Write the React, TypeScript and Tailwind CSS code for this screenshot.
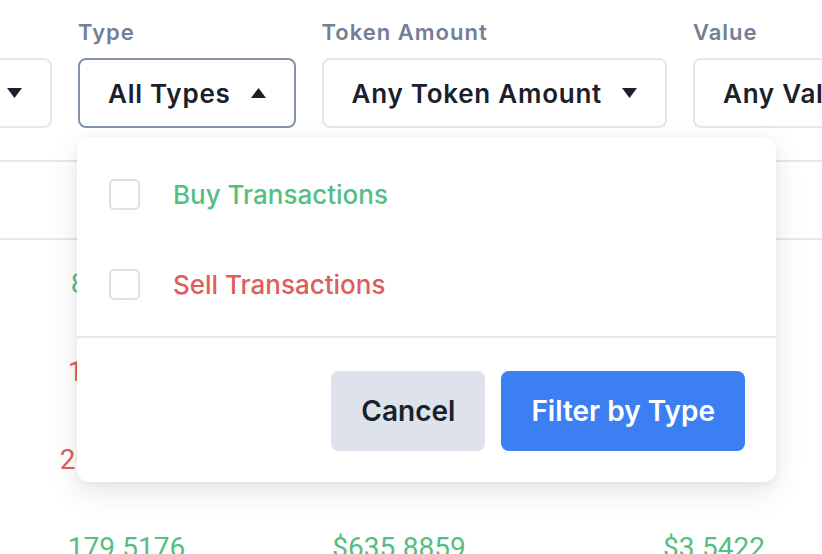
import React from "react";

function Caret({ up }: { up?: boolean }) {
  return (
    <svg width="15" height="10" viewBox="0 0 15 10" className="shrink-0">
      {up ? <path d="M7.5 0 L15 10 L0 10 Z" fill="#1a202c" /> : <path d="M0 0 L15 0 L7.5 10 Z" fill="#1a202c" />}
    </svg>
  );
}

function Filter({ label, value, active, extra }: { label: string; value: string; active?: boolean; extra?: string }) {
  return (
    <div className={"flex flex-col shrink-0 " + (extra ?? "")}>
      <div className="text-[22px] leading-[28px] font-semibold tracking-[1px] text-[#718096] mb-[12px] whitespace-nowrap">{label}</div>
      <div
        className={
          "h-[70px] flex items-center justify-end gap-[20px] px-[28px] rounded-[8px] border-2 bg-white whitespace-nowrap " +
          (active ? "border-[#8593a8]" : "border-[#e2e8f0]")
        }
      >
        <span className="text-[26px] font-semibold tracking-[0.75px] text-[#1a202c]">{value}</span>
        <Caret up={active} />
      </div>
    </div>
  );
}

const GREEN = "text-[#55be81]";
const RED = "text-[#e05d5a]";

const rows: { c: string; v: string[] }[] = [
  { c: GREEN, v: ["84.29317", "$298.4410", "$3.5404"] },
  { c: RED, v: ["152.0378", "$538.7719", "$3.5437"] },
  { c: RED, v: ["2046.1183", "$7251.0962", "$3.5439"] },
  { c: GREEN, v: ["179.5176", "$635.8859", "$3.5422"] },
];

export default function App() {
  return (
    <div className="relative w-[822px] h-[554px] overflow-hidden bg-white" style={{ fontFamily: "Inter, 'Noto Sans', sans-serif" }}>
      <div className="flex gap-[26px] pt-[18px] ml-[-148px]">
        <Filter label="Date" value="Any Date" extra="w-[200px]" />
        <Filter label="Type" value="All Types" active />
        <Filter label="Token Amount" value="Any Token Amount" />
        <Filter label="Value" value="Any Value" />
      </div>

      <div className="mt-[32px] border-y-2 border-[#e2e8f0] h-[80px]" />
      <div style={{ fontFamily: "Roboto, sans-serif" }}>
        {rows.map((r, i) => (
          <div key={i} className={"grid grid-cols-[253px_292px_338px] h-[88px] items-center text-[28px] " + r.c}>
            {r.v.map((t, j) => (
              <div key={j} className={"text-center " + (i === 0 && j === 0 ? "pl-[6px]" : "")}>{t}</div>
            ))}
          </div>
        ))}
      </div>

      <div className="absolute left-[77px] top-[137px] w-[699px] bg-white rounded-[12px] shadow-[0_10px_30px_rgba(0,0,0,0.10),0_2px_8px_rgba(0,0,0,0.05)]">
        <div className="pt-[12px] pb-[7px] px-[32px]">
          {[
            { t: "Buy Transactions", c: GREEN },
            { t: "Sell Transactions", c: RED },
          ].map((o) => (
            <div key={o.t} className="h-[90px] flex items-center gap-[33px]">
              <div className="w-[31px] h-[31px] rounded-[5px] border-2 border-[#dde2ea] bg-white" />
              <span className={"text-[26px] font-medium " + o.c}>{o.t}</span>
            </div>
          ))}
        </div>
        <div className="h-[2px] bg-[#e2e8f0]" />
        <div className="flex justify-end gap-[16px] pt-[33px] pb-[31px] pr-[31px]">
          <button className="h-[80px] px-[30px] rounded-[8px] bg-[#dee3eb] text-[28px] font-semibold text-[#1a202c]">Cancel</button>
          <button className="h-[80px] px-[30px] rounded-[8px] bg-[#3b7ff3] text-[28px] font-semibold text-white">Filter by Type</button>
        </div>
      </div>
    </div>
  );
}
